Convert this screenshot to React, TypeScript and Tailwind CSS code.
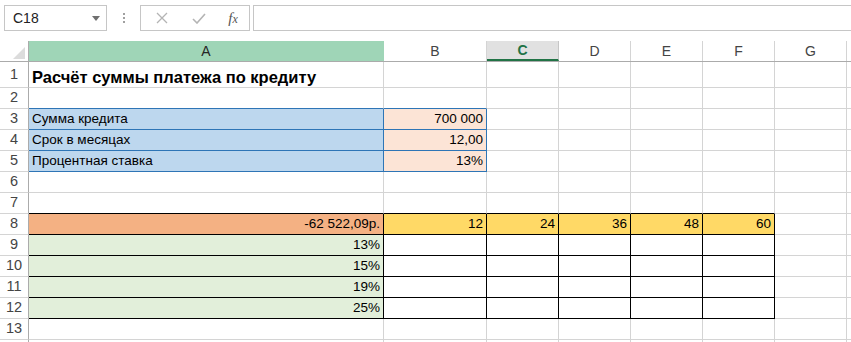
import React from "react";

type Cell = { text?: string; right?: boolean; bg?: string; bold?: boolean };

const colWidths = ["w-[355px]", "w-[103px]", "w-[72px]", "w-[72px]", "w-[72px]", "w-[72px]", "w-[72px]"];
const letters = ["A", "B", "C", "D", "E", "F", "G"];

const rows: { n: number; h: string; cells: Cell[] }[] = [
  { n: 1, h: "h-[26px]", cells: [{ text: "Расчёт суммы платежа по кредиту", bold: true }] },
  { n: 2, h: "h-[21px]", cells: [] },
  {
    n: 3,
    h: "h-[21px]",
    cells: [
      { text: "Сумма кредита", bg: "bg-[#bdd7ee]" },
      { text: "700 000", right: true, bg: "bg-[#fce4d6]" },
    ],
  },
  {
    n: 4,
    h: "h-[21px]",
    cells: [
      { text: "Срок в месяцах", bg: "bg-[#bdd7ee]" },
      { text: "12,00", right: true, bg: "bg-[#fce4d6]" },
    ],
  },
  {
    n: 5,
    h: "h-[21px]",
    cells: [
      { text: "Процентная ставка", bg: "bg-[#bdd7ee]" },
      { text: "13%", right: true, bg: "bg-[#fce4d6]" },
    ],
  },
  { n: 6, h: "h-[21px]", cells: [] },
  { n: 7, h: "h-[21px]", cells: [] },
  {
    n: 8,
    h: "h-[21px]",
    cells: [
      { text: "-62 522,09р.", right: true, bg: "bg-[#f4b183]" },
      { text: "12", right: true, bg: "bg-[#ffd966]" },
      { text: "24", right: true, bg: "bg-[#ffd966]" },
      { text: "36", right: true, bg: "bg-[#ffd966]" },
      { text: "48", right: true, bg: "bg-[#ffd966]" },
      { text: "60", right: true, bg: "bg-[#ffd966]" },
    ],
  },
  { n: 9, h: "h-[21px]", cells: [{ text: "13%", right: true, bg: "bg-[#e2efda]" }] },
  { n: 10, h: "h-[21px]", cells: [{ text: "15%", right: true, bg: "bg-[#e2efda]" }] },
  { n: 11, h: "h-[21px]", cells: [{ text: "19%", right: true, bg: "bg-[#e2efda]" }] },
  { n: 12, h: "h-[21px]", cells: [{ text: "25%", right: true, bg: "bg-[#e2efda]" }] },
  { n: 13, h: "h-[21px]", cells: [] },
  { n: 14, h: "h-[21px]", cells: [] },
];

const inBlue = (r: number, c: number) => r >= 3 && r <= 5 && c >= 0 && c <= 1;
const inBlack = (r: number, c: number) => r >= 8 && r <= 12 && c >= 0 && c <= 5;

const rightCls = { gray: "border-r-[#d4d4d4]", blue: "border-r-[#2e75b6]", black: "border-r-black" };
const bottomCls = { gray: "border-b-[#d4d4d4]", blue: "border-b-[#2e75b6]", black: "border-b-black" };

function edge(a: [number, number], b: [number, number]): "gray" | "blue" | "black" {
  if (inBlack(...a) || inBlack(...b)) return "black";
  if (inBlue(...a) || inBlue(...b)) return "blue";
  return "gray";
}

function NameBox() {
  return (
    <div className="flex h-[26px] w-[103px] items-center justify-between border border-[#c6c6c6] bg-white pl-[8px] pr-[6px]">
      <span className="text-[14px] text-[#222]">C18</span>
      <svg width="8" height="5" viewBox="0 0 8 5">
        <path d="M0 0h8L4 5z" fill="#707070" />
      </svg>
    </div>
  );
}

function FormulaButtons() {
  return (
    <div className="flex h-[26px] w-[110px] items-center border border-[#c6c6c6] bg-white">
      <div className="flex w-[40px] justify-center pl-[2px]">
        <svg width="12" height="12" viewBox="0 0 12 12">
          <path d="M1 1l10 10M11 1L1 11" stroke="#b4b4b4" strokeWidth="1.3" />
        </svg>
      </div>
      <div className="flex w-[36px] justify-center">
        <svg width="14" height="11" viewBox="0 0 14 11">
          <path d="M1 6l4 4 8-9" stroke="#b4b4b4" strokeWidth="1.6" fill="none" />
        </svg>
      </div>
      <div className="flex w-[32px] justify-center">
        <span className="font-['Liberation_Serif',serif] text-[15px] italic text-[#555]">
          f<span className="text-[12px]">x</span>
        </span>
      </div>
    </div>
  );
}

export default function App() {
  return (
    <div className="h-[342px] w-[851px] overflow-hidden bg-white font-['Liberation_Sans',Arial,sans-serif] text-[13.5px] text-black">
      {/* formula bar */}
      <div className="flex h-[41px] items-start pt-[5px] pl-[4px]">
        <NameBox />
        <div className="flex w-[33px] flex-col items-center gap-[2px] pt-[8px]">
          <span className="h-[2px] w-[2px] bg-[#a0a0a0]" />
          <span className="h-[2px] w-[2px] bg-[#a0a0a0]" />
          <span className="h-[2px] w-[2px] bg-[#a0a0a0]" />
        </div>
        <FormulaButtons />
        <div className="ml-[3px] h-[26px] flex-1 border border-r-0 border-[#c6c6c6] bg-white" />
      </div>

      {/* column headers */}
      <div className="flex h-[21px] border-b border-b-[#ababab] text-[14px] text-[#444]">
        <div className="relative w-[29px] shrink-0 border-r border-r-[#ababab]">
          <svg className="absolute bottom-[2px] right-[3px]" width="12" height="12" viewBox="0 0 12 12">
            <path d="M12 0V12H0z" fill="#dcdcdc" />
          </svg>
        </div>
        {letters.map((l, i) => {
          const base = `${colWidths[i]} shrink-0 flex items-center justify-center border-r`;
          if (i === 0)
            return (
              <div key={l} className={`${base} border-r-[#9fd5b7] bg-[#9fd5b7] text-[#262626]`}>
                {l}
              </div>
            );
          if (i === 2)
            return (
              <div
                key={l}
                className={`${base} border-r-[#c6c6c6] border-b-2 border-b-[#217346] bg-[#e1e1e1] font-bold text-[#217346]`}
              >
                {l}
              </div>
            );
          return (
            <div key={l} className={`${base} border-r-[#d4d4d4]`}>
              {l}
            </div>
          );
        })}
        <div className="flex-1" />
      </div>

      {/* rows */}
      {rows.map((row) => (
        <div key={row.n} className={`flex ${row.h}`}>
          <div className="flex w-[29px] shrink-0 items-center justify-center border-r border-b border-r-[#ababab] border-b-[#d4d4d4] text-[14.5px] text-[#444]">
            {row.n < 14 ? row.n : ""}
          </div>
          {letters.map((l, c) => {
            const cell = row.cells[c] ?? {};
            const r = row.n;
            const rc = rightCls[edge([r, c], [r, c + 1])];
            const bc = bottomCls[edge([r, c], [r + 1, c])];
            return (
              <div
                key={l}
                className={`${colWidths[c]} shrink-0 flex items-end overflow-visible whitespace-nowrap border-r border-b ${rc} ${bc} ${
                  cell.bg ?? ""
                } ${cell.right ? "justify-end pr-[3px]" : "pl-[3px]"} ${
                  cell.bold ? "pb-0 text-[16.5px] leading-[20px] font-bold" : "pb-[1px] text-[13.5px] leading-[18px]"
                }`}
              >
                {cell.text}
              </div>
            );
          })}
          <div className="flex-1 border-b border-b-[#d4d4d4]" />
        </div>
      ))}
    </div>
  );
}
